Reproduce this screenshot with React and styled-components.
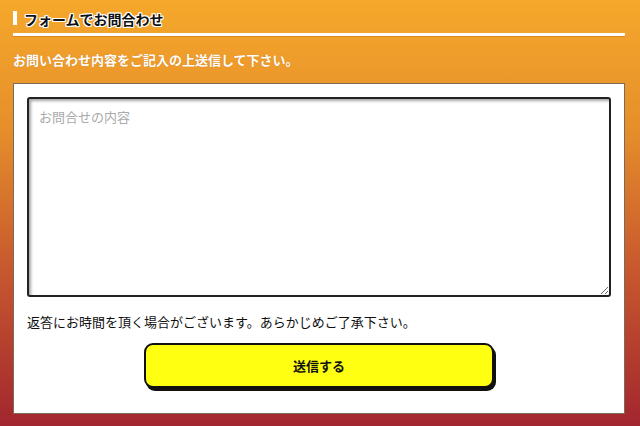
import styled, { createGlobalStyle } from 'styled-components'

const GlobalStyle = createGlobalStyle`
  html, body {
    margin: 0;
    padding: 0;
  }
  body {
    font-family: "Noto Sans CJK JP", "Noto Sans", sans-serif;
  }
`

const Page = styled.div`
  width: 640px;
  height: 426px;
  box-sizing: border-box;
  padding: 8px 15px 0 13px;
  background: linear-gradient(180deg, #f5a82b 0%, #e68f2b 30%, #c85a2e 62%, #a2262f 100%);
  overflow: hidden;
`

const Heading = styled.h2`
  display: flex;
  align-items: center;
  gap: 7px;
  margin: 0;
  padding-bottom: 3px;
  border-bottom: 3px solid #fff;
  box-shadow: 0 1px 0 rgba(200, 110, 0, 0.5);
  font-size: 14px;
  font-weight: bold;
  line-height: 22px;
  color: #111;
  text-shadow: 1px 1px 0 #fff, -1px -1px 0 #fff, 1px -1px 0 #fff, -1px 1px 0 #fff,
    0 1px 0 #fff, 0 -1px 0 #fff, 1px 0 0 #fff, -1px 0 0 #fff;

  &::before {
    content: "";
    width: 4px;
    height: 14px;
    background: #fff;
    margin-top: -3px;
  }
`

const Lead = styled.p`
  margin: 14px 0 0;
  font-size: 13px;
  font-weight: bold;
  line-height: 20px;
  color: #fff;
  text-shadow: 0 0 1px rgba(150, 70, 0, 0.4);
`

const Panel = styled.div`
  margin-top: 13px;
  height: 331px;
  box-sizing: border-box;
  background: #fff;
  border: 1px solid #7a6a5a;
  padding: 13px 13px 0;
  display: flex;
  flex-direction: column;
`

const Message = styled.textarea`
  display: block;
  width: 100%;
  height: 200px;
  box-sizing: border-box;
  padding: 8px 10px;
  border: 2px solid #222;
  border-radius: 3px;
  box-shadow: inset 2px 2px 3px rgba(0, 0, 0, 0.35);
  font-family: inherit;
  font-size: 13px;
  line-height: 20px;
  resize: vertical;
  outline: none;

  &::placeholder {
    color: #aaa;
  }
`

const Note = styled.p`
  margin: 15px 0 0;
  font-size: 13px;
  line-height: 20px;
  color: #111;
`

const Submit = styled.button`
  display: block;
  align-self: center;
  width: 60%;
  height: 45px;
  margin-top: 11px;
  background: #ffff12;
  border: 2px solid #111;
  border-radius: 9px;
  box-shadow: 2px 3px 0 #111;
  font-family: inherit;
  font-size: 13px;
  font-weight: bold;
  color: #111;
  cursor: pointer;
`

export default function App() {
  return (
    <>
      <GlobalStyle />
      <Page>
        <Heading>フォームでお問合わせ</Heading>
        <Lead>お問い合わせ内容をご記入の上送信して下さい。</Lead>
        <Panel>
          <Message placeholder="お問合せの内容" />
          <Note>返答にお時間を頂く場合がございます。あらかじめご了承下さい。</Note>
          <Submit type="button">送信する</Submit>
        </Panel>
      </Page>
    </>
  )
}
